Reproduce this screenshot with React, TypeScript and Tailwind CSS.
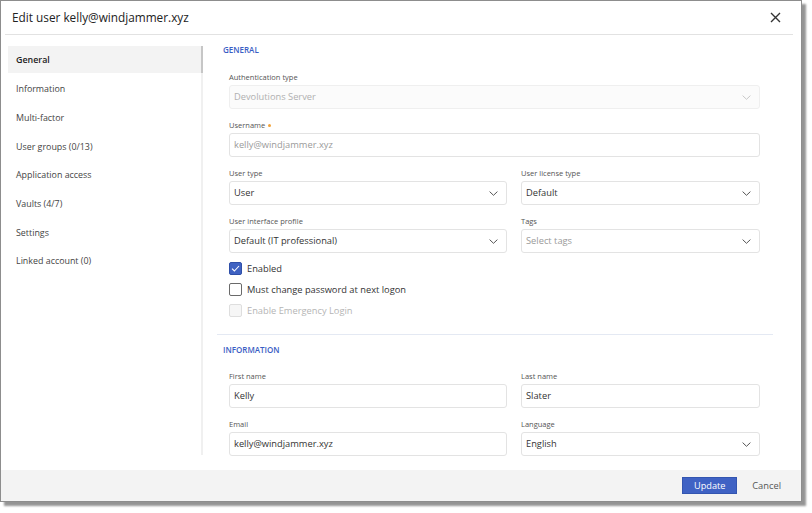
import React from 'react';

const navItems = [
  'General',
  'Information',
  'Multi-factor',
  'User groups (0/13)',
  'Application access',
  'Vaults (4/7)',
  'Settings',
  'Linked account (0)',
];

function Chevron({ light }: { light?: boolean }) {
  return (
    <svg width="9" height="5" viewBox="0 0 9 5" className="shrink-0">
      <polyline
        points="0.6,0.6 4.5,4.3 8.4,0.6"
        fill="none"
        stroke={light ? '#c8c8c8' : '#555'}
        strokeWidth="1"
      />
    </svg>
  );
}

function Label({ text, required }: { text: string; required?: boolean }) {
  return (
    <div className="h-[12px] leading-[12px] mb-[2px] text-[7.5px] text-[#555] flex items-center gap-[3px]">
      {text}
      {required && <span className="w-[3px] h-[3px] rounded-full bg-[#f2a33a]" />}
    </div>
  );
}

function TextBox({ value, muted }: { value: string; muted?: boolean }) {
  return (
    <div
      className={`h-[24px] border border-[#e3e3e3] rounded-[3px] bg-white pl-[4px] flex items-center text-[9.3px] ${
        muted ? 'text-[#9a9a9a]' : 'text-[#333]'
      }`}
    >
      {value}
    </div>
  );
}

function SelectBox({ value, placeholder, disabled }: { value: string; placeholder?: boolean; disabled?: boolean }) {
  return (
    <div
      className={`h-[24px] border rounded-[3px] pl-[4px] pr-[8px] flex items-center justify-between text-[9.3px] ${
        disabled ? 'bg-[#fbfbfb] border-[#efefef] text-[#b0b0b0]' : 'bg-white border-[#e3e3e3]'
      } ${placeholder ? 'text-[#9a9a9a]' : disabled ? '' : 'text-[#333]'}`}
    >
      <span>{value}</span>
      <Chevron light={disabled} />
    </div>
  );
}

function Check({ label, checked, disabled }: { label: string; checked?: boolean; disabled?: boolean }) {
  return (
    <div className="h-[21px] flex items-center gap-[5px]">
      {checked ? (
        <div className="w-[13px] h-[13px] rounded-[2px] bg-[#3f62c2] border border-[#2f4fa8] flex items-center justify-center">
          <svg width="9" height="7" viewBox="0 0 9 7">
            <polyline points="1,3.6 3.4,6 8,1" fill="none" stroke="white" strokeWidth="1.1" />
          </svg>
        </div>
      ) : (
        <div
          className={`w-[13px] h-[13px] rounded-[2px] border ${
            disabled ? 'border-[#dedede] bg-[#f6f6f6]' : 'border-[#6a6a6a] bg-white'
          }`}
        />
      )}
      <span className={`text-[9.3px] ${disabled ? 'text-[#b5b5b5]' : 'text-[#333]'}`}>{label}</span>
    </div>
  );
}

export default function App() {
  return (
    <div className="w-[812px] h-[513px] bg-white" style={{ fontFamily: '"Open Sans", sans-serif' }}>
      <div className="w-[802px] h-[502px] border border-[#8d8d8d] bg-white flex flex-col shadow-[4px_4px_2px_rgba(0,0,0,0.42)]">
        {/* header */}
        <div className="h-[33px] flex items-center justify-between pl-[11px] pr-[20px]">
          <span className="text-[11.8px] text-[#222]">Edit user kelly@windjammer.xyz</span>
          <svg width="11" height="11" viewBox="0 0 11 11">
            <path d="M1 1 L10 10 M10 1 L1 10" stroke="#333" strokeWidth="1.4" />
          </svg>
        </div>
        <div className="h-px bg-[#e2e2e2] ml-[4px] mr-[8px]" />

        {/* body */}
        <div className="h-[422px] flex overflow-hidden">
          <div className="flex pl-[7px] pt-[11px]">
            <div className="w-[193px]">
              {navItems.map((item, i) => (
                <div
                  key={item}
                  className={`flex items-center pl-[8px] text-[8.9px] ${
                    i === 0 ? 'h-[27px] mb-[1.5px] bg-[#f3f3f3] text-[#222] font-semibold' : 'h-[28.7px] text-[#444]'
                  }`}
                >
                  {item}
                </div>
              ))}
            </div>
            <div className="w-[2px] h-[409px] bg-[#f0f0f0]">
              <div className="h-[27px] bg-[#c6c6c6]" />
            </div>
          </div>

          <div className="flex-1 pl-[14px]">
            <div className="w-[556px]">
              {/* general */}
              <div className="pt-[9px] pb-[13px] border-b border-[#e4e9f3]">
                <div className="h-[12px] leading-[12px] pl-[6px] text-[8px] font-semibold text-[#3a5ec4]">GENERAL</div>
                <div className="pl-[12px] pr-[13px] mt-[15px] flex flex-col gap-[10px]">
                  <div>
                    <Label text="Authentication type" />
                    <SelectBox value="Devolutions Server" disabled />
                  </div>
                  <div>
                    <Label text="Username" required />
                    <TextBox value="kelly@windjammer.xyz" muted />
                  </div>
                  <div className="grid grid-cols-[278px_239px] gap-x-[14px]">
                    <div>
                      <Label text="User type" />
                      <SelectBox value="User" />
                    </div>
                    <div>
                      <Label text="User license type" />
                      <SelectBox value="Default" />
                    </div>
                  </div>
                  <div className="grid grid-cols-[278px_239px] gap-x-[14px]">
                    <div>
                      <Label text="User interface profile" />
                      <SelectBox value="Default (IT professional)" />
                    </div>
                    <div>
                      <Label text="Tags" />
                      <SelectBox value="Select tags" placeholder />
                    </div>
                  </div>
                </div>
                <div className="pl-[12px] mt-[5px]">
                  <Check label="Enabled" checked />
                  <Check label="Must change password at next logon" />
                  <Check label="Enable Emergency Login" disabled />
                </div>
              </div>

              {/* information */}
              <div className="pt-[9px]">
                <div className="h-[12px] leading-[12px] pl-[6px] text-[8px] font-semibold text-[#3a5ec4]">INFORMATION</div>
                <div className="pl-[12px] pr-[13px] mt-[14px] flex flex-col gap-[10px]">
                  <div className="grid grid-cols-[278px_239px] gap-x-[14px]">
                    <div>
                      <Label text="First name" />
                      <TextBox value="Kelly" />
                    </div>
                    <div>
                      <Label text="Last name" />
                      <TextBox value="Slater" />
                    </div>
                  </div>
                  <div className="grid grid-cols-[278px_239px] gap-x-[14px]">
                    <div>
                      <Label text="Email" />
                      <TextBox value="kelly@windjammer.xyz" />
                    </div>
                    <div>
                      <Label text="Language" />
                      <SelectBox value="English" />
                    </div>
                  </div>
                </div>
              </div>
            </div>
          </div>
        </div>

        <div className="h-[13px]" />

        {/* footer */}
        <div className="h-[31px] bg-[#f3f3f3] flex items-center justify-end pr-[20px]">
          <button className="w-[55px] h-[17px] bg-[#3f62c4] border border-[#3355b0] text-white text-[9.2px] flex items-center justify-center">
            Update
          </button>
          <button className="ml-[15px] text-[9.3px] text-[#555]">Cancel</button>
        </div>
      </div>
    </div>
  );
}
